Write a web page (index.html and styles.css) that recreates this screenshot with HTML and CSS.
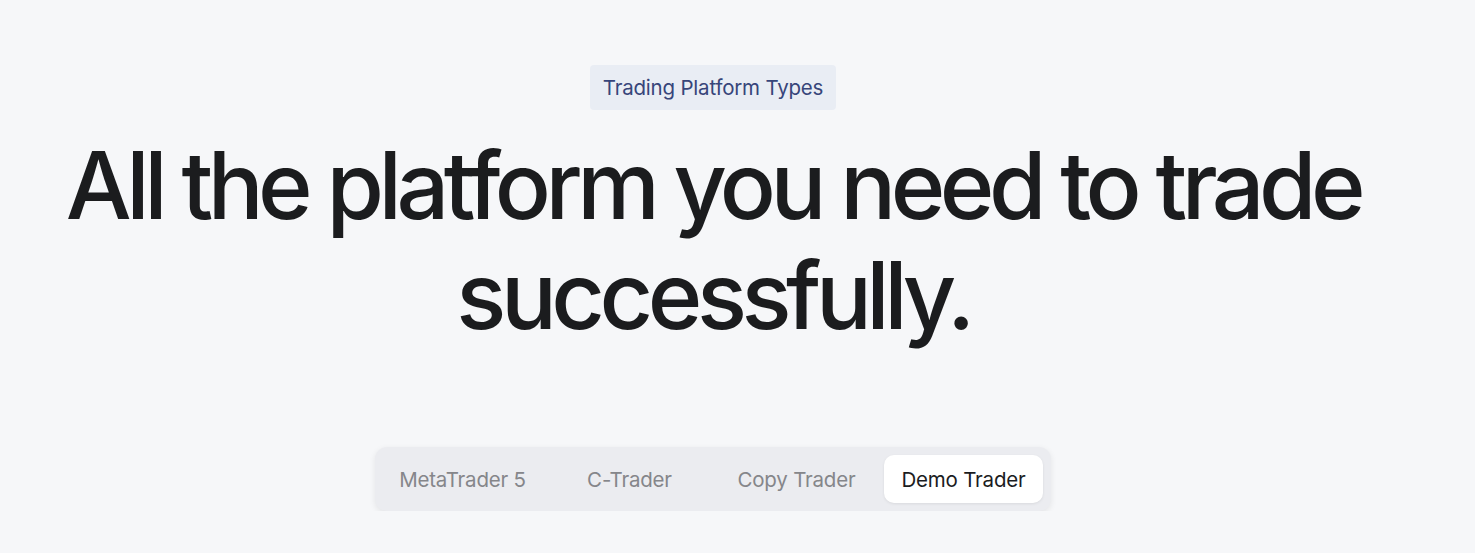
FILE: index.html
```html
<!DOCTYPE html>
<html lang="en">
<head>
<meta charset="utf-8">
<link rel="stylesheet" href="styles.css">
</head>
<body>
<main class="page">
  <section class="hero">
    <div class="badge">Trading Platform Types</div>
    <h1 class="title">All the platform you need to trade<br>successfully.</h1>
    <nav class="tabs">
      <div class="tab">MetaTrader 5</div>
      <div class="tab">C-Trader</div>
      <div class="tab">Copy Trader</div>
      <div class="tab active">Demo Trader</div>
    </nav>
  </section>
</main>
</body>
</html>
```
FILE: styles.css
```css
html, body {
  margin: 0;
  padding: 0;
  background: #f6f7f9;
}
body {
  font-family: Inter, "Noto Sans", sans-serif;
  color: #1b1c1e;
}
.page {
  width: 1426px;
}
.hero {
  display: flex;
  flex-direction: column;
  align-items: center;
  padding-top: 65px;
}
.badge {
  background: #e9edf4;
  color: #37457a;
  font-size: 20.5px;
  line-height: 45px;
  padding: 0 13px;
  border-radius: 4px;
  letter-spacing: -0.01em;
}
.title {
  margin: 20px 0 0;
  font-size: 93px;
  font-weight: 500;
  line-height: 110px;
  letter-spacing: -0.059em;
  text-align: center;
  color: #1b1c1e;
}
.tabs {
  margin-top: 97px;
  display: grid;
  grid-template-columns: repeat(4, 159px);
  gap: 8px;
  padding: 8px;
  background: #ebecf0;
  border-radius: 12px;
  box-shadow: 0 2px 6px rgba(0, 0, 0, 0.08);
}
.tab {
  height: 48px;
  display: flex;
  align-items: center;
  justify-content: center;
  font-size: 20.5px;
  color: #85868a;
  border-radius: 10px;
  letter-spacing: -0.01em;
}
.tab.active {
  background: #ffffff;
  color: #1b1c1e;
  box-shadow: 0 1px 3px rgba(0, 0, 0, 0.08);
}
```
